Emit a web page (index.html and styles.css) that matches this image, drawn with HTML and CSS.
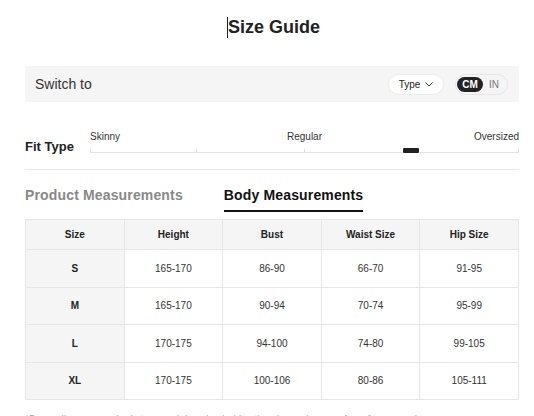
FILE: index.html
```html
<!DOCTYPE html>
<html>
<head>
<meta charset="utf-8">
<link rel="stylesheet" href="styles.css">
</head>
<body>
<div class="page">
  <h1 class="title"><span class="caret"></span>Size Guide</h1>

  <div class="switch-bar">
    <span class="switch-label">Switch to</span>
    <div class="type-pill">Type
      <svg class="chev" width="8" height="5" viewBox="0 0 8 5"><path d="M0.5 0.5 L4 4 L7.5 0.5" fill="none" stroke="#333" stroke-width="1"/></svg>
    </div>
    <div class="unit-toggle">
      <span class="unit active">CM</span>
      <span class="unit">IN</span>
    </div>
  </div>

  <div class="fit">
    <div class="fit-label">Fit Type</div>
    <div class="slider">
      <div class="slider-labels">
        <span class="sl-left">Skinny</span>
        <span class="sl-center">Regular</span>
        <span class="sl-right">Oversized</span>
      </div>
      <div class="track">
        <span class="tick" style="left:0%"></span>
        <span class="tick" style="left:24.8%"></span>
        <span class="tick" style="left:49.8%"></span>
        <span class="tick" style="left:99.8%"></span>
        <span class="marker"></span>
      </div>
    </div>
  </div>

  <div class="tabs">
    <span class="tab">Product Measurements</span>
    <span class="tab active">Body Measurements</span>
  </div>

  <table class="size-table">
    <thead>
      <tr><th>Size</th><th>Height</th><th>Bust</th><th>Waist Size</th><th>Hip Size</th></tr>
    </thead>
    <tbody>
      <tr><th>S</th><td>165-170</td><td>86-90</td><td>66-70</td><td>91-95</td></tr>
      <tr><th>M</th><td>165-170</td><td>90-94</td><td>70-74</td><td>95-99</td></tr>
      <tr><th>L</th><td>170-175</td><td>94-100</td><td>74-80</td><td>99-105</td></tr>
      <tr><th>XL</th><td>170-175</td><td>100-106</td><td>80-86</td><td>105-111</td></tr>
    </tbody>
  </table>

  <p class="note">*Depending on your body type and dressing habits, the above sizes are for reference only.</p>
</div>
</body>
</html>
```

FILE: styles.css
```css
html, body {
  margin: 0;
  padding: 0;
  background: #fff;
}
body {
  font-family: "Liberation Sans", Arial, sans-serif;
  color: #222;
  overflow: hidden;
}
.page {
  margin-left: 25px;
  width: 494px;
}
.title {
  margin: 0;
  padding-top: 16px;
  height: 22px;
  line-height: 22px;
  margin-bottom: 28px;
  font-size: 18px;
  font-weight: bold;
  text-align: center;
  color: #222;
}
.caret {
  display: inline-block;
  width: 0;
  height: 21px;
  border-left: 1px solid #222;
  vertical-align: -5px;
  margin-left: 3px;
}
.switch-bar {
  height: 36px;
  background: #f5f5f5;
  display: flex;
  align-items: center;
  padding: 0 11px 0 10px;
}
.switch-label {
  font-size: 14px;
  color: #333;
}
.type-pill {
  margin-left: auto;
  width: 56px;
  height: 21px;
  box-sizing: border-box;
  background: #fff;
  border: 1px solid #ececec;
  border-radius: 11px;
  display: flex;
  align-items: center;
  justify-content: center;
  gap: 5px;
  font-size: 10px;
  color: #222;
}
.chev {
  display: block;
  margin-top: 1px;
}
.unit-toggle {
  margin-left: 11px;
  width: 53px;
  height: 21px;
  box-sizing: border-box;
  border: 1px solid #e6e6e6;
  border-radius: 11px;
  display: flex;
  align-items: center;
  padding-left: 1px;
  gap: 6px;
}
.unit {
  font-size: 10px;
  color: #777;
}
.unit.active {
  background: #222;
  color: #fff;
  font-weight: bold;
  border-radius: 8px;
  width: 26px;
  height: 15px;
  line-height: 15px;
  text-align: center;
}
.fit {
  display: flex;
  align-items: flex-end;
  margin-top: 29px;
}
.fit-label {
  width: 65px;
  font-size: 13px;
  line-height: 15px;
  font-weight: bold;
  color: #222;
  position: relative;
  top: 1px;
}
.slider {
  width: 429px;
}
.slider-labels {
  display: grid;
  grid-template-columns: 1fr auto 1fr;
  font-size: 10px;
  line-height: 12px;
  color: #333;
}
.sl-left { text-align: left; }
.sl-center { text-align: center; }
.sl-right { text-align: right; }
.track {
  position: relative;
  height: 5px;
  margin-top: 4px;
  border-bottom: 1px solid #e3e3e3;
}
.tick {
  position: absolute;
  bottom: 0;
  width: 1px;
  height: 3px;
  background: #dcdcdc;
}
.marker {
  position: absolute;
  left: 313px;
  bottom: -1px;
  width: 16px;
  height: 5px;
  background: #222;
  border-radius: 1px;
}
.tabs {
  margin-top: 16px;
  border-top: 1px solid #e8e8e8;
  padding-top: 17px;
  display: flex;
  gap: 41px;
}
.tab {
  font-size: 14px;
  line-height: 17px;
  font-weight: bold;
  color: #888;
  padding-bottom: 6px;
  letter-spacing: 0.15px;
}
.tab.active {
  color: #111;
  border-bottom: 2px solid #111;
}
.size-table {
  margin-top: 7px;
  width: 494px;
  border-collapse: collapse;
  table-layout: fixed;
  font-size: 10px;
  color: #222;
}
.size-table th,
.size-table td {
  border: 1px solid #e6e6e6;
  text-align: center;
  padding: 0;
}
.size-table thead th {
  height: 29px;
  background: #f5f5f5;
  font-weight: bold;
}
.size-table tbody th {
  background: #f5f5f5;
  font-weight: bold;
  height: 36.5px;
}
.size-table tbody td {
  height: 36.5px;
  color: #333;
}
.note {
  margin: 14px 0 0;
  font-size: 10px;
  line-height: 12px;
  color: #aaa;
  white-space: nowrap;
}
```
